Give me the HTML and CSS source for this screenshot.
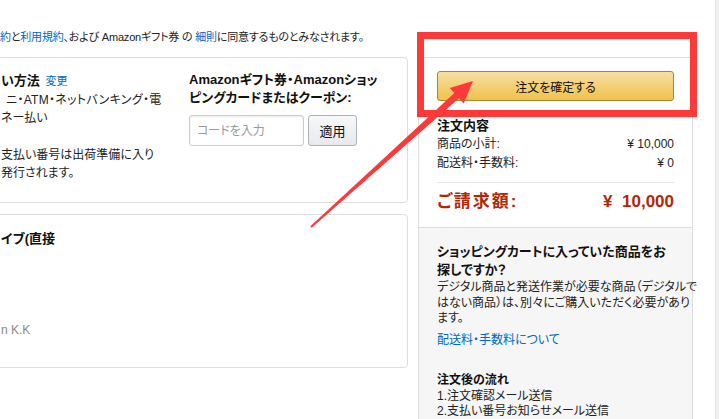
FILE: index.html
```html
<!DOCTYPE html>
<html lang="ja">
<head>
<meta charset="utf-8">
<title>注文の確定</title>
<link rel="stylesheet" href="styles.css">
</head>
<body>
<div class="page">
  <div class="content">
    <p class="notice"><a href="#">約</a>と<a href="#">利用規約</a>、および Amazonギフト券 の <a href="#">細則</a>に同意するものとみなされます。</p>
    <div class="main">
      <div class="left">
        <section class="card pay">
          <div class="pay-method">
            <div class="card-title">い方法 <a class="small-link" href="#">変更</a></div>
            <div class="line indent">ニ・ATM・ネットバンキング・電</div>
            <div class="line">ネー払い</div>
            <div class="line gap">支払い番号は出荷準備に入り</div>
            <div class="line">発行されます。</div>
          </div>
          <div class="gift">
            <div class="gift-title">Amazonギフト券・Amazonショッ<br>ピングカードまたはクーポン:</div>
            <div class="gift-form">
              <input class="code" type="text" placeholder="コードを入力">
              <button class="apply" type="button">適用</button>
            </div>
          </div>
        </section>
        <section class="card ship">
          <div class="card-title">イブ(直接</div>
          <div class="muted">n K.K</div>
        </section>
      </div>
      <aside class="summary">
        <div class="summary-top">
          <button class="place-order" type="button">注文を確定する</button>
          <div class="sum-title">注文内容</div>
          <div class="row"><span>商品の小計:</span><span>¥ 10,000</span></div>
          <div class="row"><span>配送料・手数料:</span><span>¥ 0</span></div>
          <div class="total"><span class="total-label">ご請求額:</span><span class="total-value">¥&nbsp; 10,000</span></div>
        </div>
        <div class="summary-info">
          <div class="info-title">ショッピングカートに入っていた商品をお<br>探しですか？</div>
          <div class="info-text">デジタル商品と発送作業が必要な商品（デジタルで<br>はない商品）は、別々にご購入いただく必要があり<br>ます。</div>
          <a class="info-link" href="#">配送料・手数料について</a>
          <div class="flow-title">注文後の流れ</div>
          <div class="info-text">1.注文確認メール送信<br>2.支払い番号お知らせメール送信</div>
        </div>
      </aside>
    </div>
  </div>
  <div class="edge"></div>
</div>
<svg class="annot" width="719" height="419" viewBox="0 0 719 419" aria-hidden="true">
  <rect x="420.5" y="35.5" width="273" height="78" fill="none" stroke="#fd3a3a" stroke-width="7"/>
  <polygon fill="#fd3a3a" points="310.3,226.3 454.4,93.1 449.7,87.9 473,81 463.7,103.5 459.0,98.3 311.7,227.7"/>
</svg>
</body>
</html>
```

FILE: styles.css
```css
* { box-sizing: border-box; }
html, body { margin: 0; padding: 0; }
body {
  width: 719px;
  height: 419px;
  overflow: hidden;
  background: #fff;
  color: #222;
  font-family: "Liberation Sans", "Noto Sans CJK JP", sans-serif;
  font-size: 12px;
  font-feature-settings: "palt";
  position: relative;
}
a { color: #0066c0; text-decoration: none; }

.page { display: flex; height: 419px; }
.content { width: 715px; }
.edge { width: 4px; background: #f0f0f0; border-left: 1px solid #e4e4e4; }

.notice {
  margin: 0;
  padding-top: 28px;
  line-height: 18px;
  height: 57px;
  font-size: 11px;
  letter-spacing: -0.2px;
  white-space: nowrap;
  color: #222;
}

.main { display: flex; gap: 10px; }
.left { margin-left: -10px; width: 418px; }

.card {
  border: 1px solid #ddd;
  border-radius: 4px;
  padding-left: 10px;
}
.pay { display: flex; gap: 10px; padding-top: 13px; padding-bottom: 20px; }
.pay-method { width: 178px; }
.card-title { font-weight: bold; font-size: 13px; line-height: 20px; color: #111; white-space: nowrap; }
.small-link { font-weight: normal; font-size: 11px; margin-left: 2px; }
.line { line-height: 18px; white-space: nowrap; }
.line.indent { padding-left: 5px; letter-spacing: 0.3px; }
.line.gap { margin-top: 19px; }

.gift-title { font-weight: bold; font-size: 13px; line-height: 18px; color: #111; white-space: nowrap; }
.gift-form { display: flex; gap: 4px; margin-top: 8px; }
.code {
  width: 115px; height: 31px;
  border: 1px solid #ccc; border-radius: 3px;
  padding: 0 7px;
  font: inherit; font-size: 12px;
  box-shadow: inset 0 1px 2px rgba(0,0,0,0.08);
}
.code::placeholder { color: #999; }
.apply {
  width: 49px; height: 31px;
  border: 1px solid #adb1b8; border-radius: 3px;
  background: linear-gradient(#f7f8fa, #e7e9ec);
  font: inherit; font-size: 13px; color: #111;
  padding: 0;
}

.ship { margin-top: 11px; padding-top: 14px; padding-bottom: 28px; }
.muted { color: #888; line-height: 18px; margin-top: 72px; }

.summary {
  width: 275px;
  height: 380px;
  border-left: 1px solid #ddd;
  border-right: 1px solid #ddd;
  border-top: 1px solid #ddd;
}
.summary-top { padding: 13px 18px 14px; }
.place-order {
  display: block;
  width: 100%; height: 30px;
  border: 1px solid #a88734; border-radius: 3px;
  background: linear-gradient(#f7dfa5, #f0c14b);
  font: inherit; font-size: 12px; color: #111;
  padding: 0;
}
.sum-title { margin-top: 16px; font-weight: bold; font-size: 13px; line-height: 18px; color: #111; }
.row { display: flex; justify-content: space-between; line-height: 19px; }
.total {
  display: flex; justify-content: space-between;
  margin-top: 9px; padding-top: 8px;
  border-top: 1px solid #e7e7e7;
  line-height: 22px; font-size: 17px; font-weight: bold; color: #b12704;
}
.total-label { letter-spacing: 2px; }

.summary-info {
  border-top: 1px solid #ddd;
  background: #f6f6f6;
  padding: 15px 18px 0;
  height: 200px;
}
.info-title { font-weight: bold; font-size: 13px; line-height: 18px; color: #111; white-space: nowrap; }
.info-text { line-height: 15.5px; margin-top: 1px; white-space: nowrap; }
.info-link { display: block; line-height: 15.5px; margin-top: 6.5px; }
.flow-title { font-weight: bold; font-size: 12px; line-height: 16px; margin-top: 23px; color: #111; }

.annot { position: absolute; left: 0; top: 0; pointer-events: none; }
```
